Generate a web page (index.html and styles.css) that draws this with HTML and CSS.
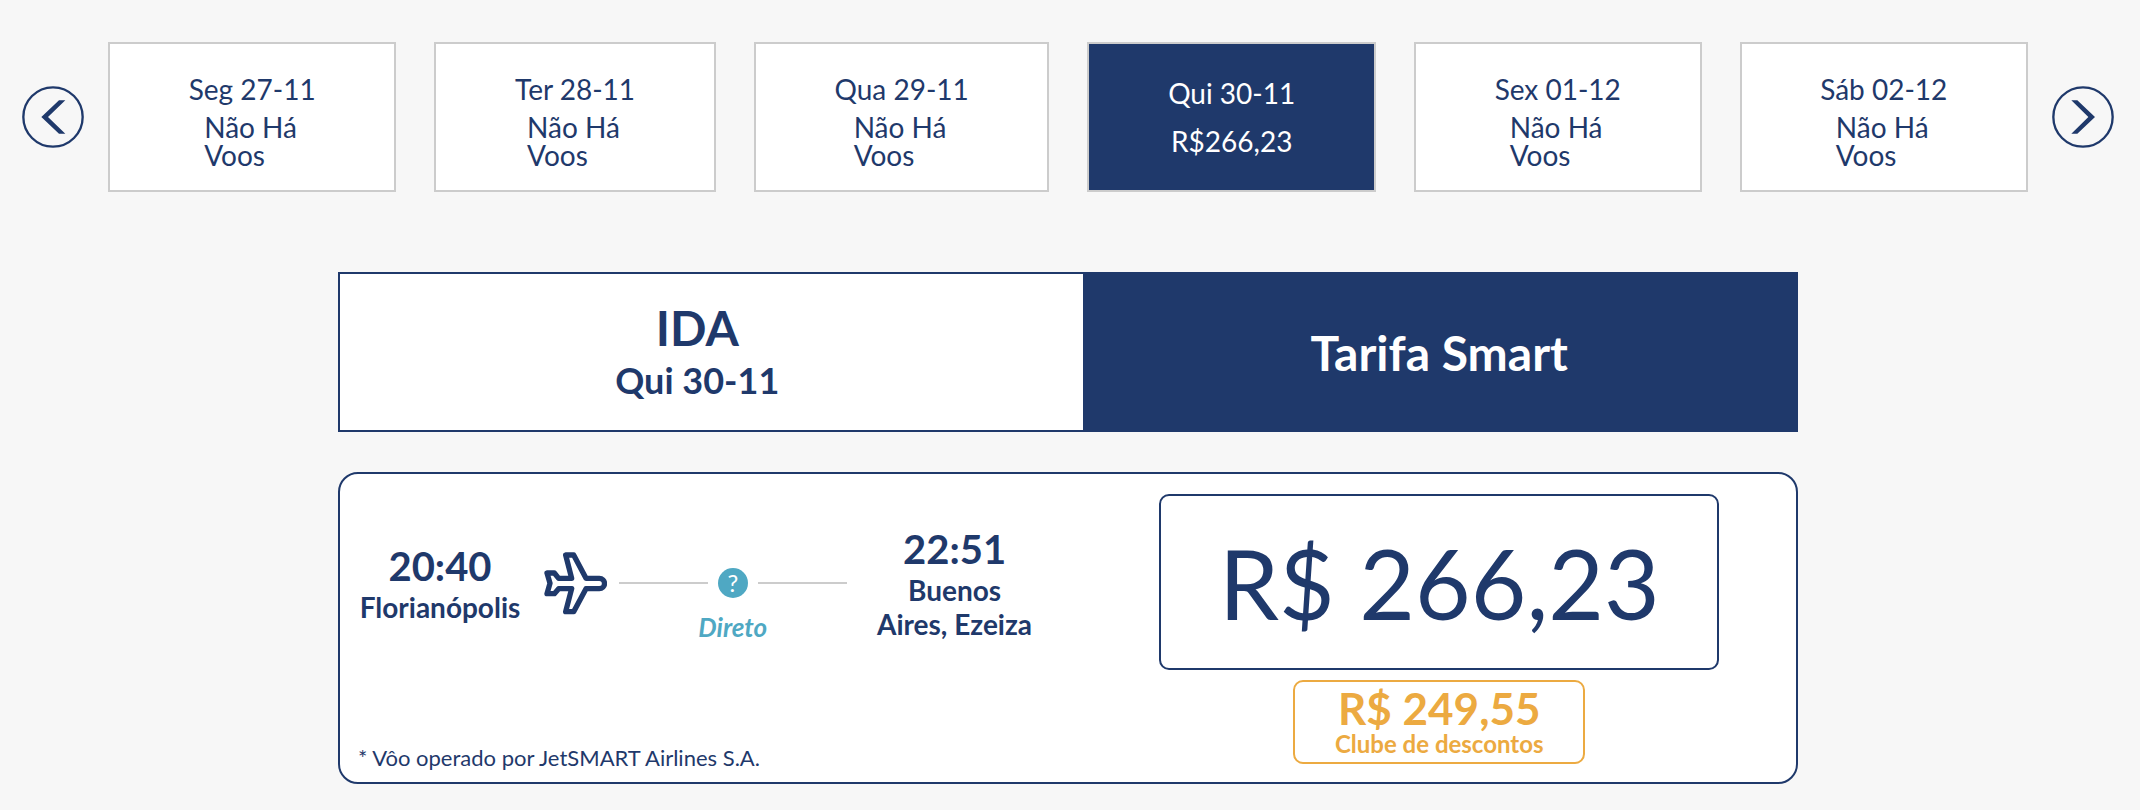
FILE: index.html
```
<!DOCTYPE html>
<html lang="pt-BR">
<head>
  <meta charset="UTF-8">
  <meta name="viewport" content="width=device-width, initial-scale=1.0">
  <title>Selecione seu voo</title>
  <link rel="stylesheet" href="styles.css">
</head>
<body>
  <!-- Datas -->
  <nav class="datas">
    <button class="seta" type="button" aria-label="Datas anteriores">
      <svg viewBox="0 0 186 186">
        <circle cx="93" cy="93" r="89"/>
        <polygon points="58,93 111,43 130,43 78,93 130,143 111,143"/>
      </svg>
    </button>
    <div class="lista-datas">
      <button class="data" type="button">
        <span>Seg 27-11</span>
        <span class="sem-voos">Não Há Voos</span>
      </button>
      <button class="data" type="button">
        <span>Ter 28-11</span>
        <span class="sem-voos">Não Há Voos</span>
      </button>
      <button class="data" type="button">
        <span>Qua 29-11</span>
        <span class="sem-voos">Não Há Voos</span>
      </button>
      <button class="data selecionada" type="button">
        <span>Qui 30-11</span>
        <span>R$266,23</span>
      </button>
      <button class="data" type="button">
        <span>Sex 01-12</span>
        <span class="sem-voos">Não Há Voos</span>
      </button>
      <button class="data" type="button">
        <span>Sáb 02-12</span>
        <span class="sem-voos">Não Há Voos</span>
      </button>
    </div>
    <button class="seta" type="button" aria-label="Próximas datas">
      <svg viewBox="0 0 186 186">
        <circle cx="93" cy="93" r="89"/>
        <polygon points="129,93 76,43 58,43 109,93 58,143 76,143"/>
      </svg>
    </button>
  </nav>

  <main class="voos">
    <!-- Cabeçalho -->
    <header class="cabecalho">
      <div class="trecho">
        <h1>IDA</h1>
        <h2>Qui 30-11</h2>
      </div>
      <div class="tarifa">Tarifa Smart</div>
    </header>

    <!-- Voo -->
    <article class="voo">
      <div class="detalhes">
        <div class="percurso">
          <div class="local origem">
            <span class="hora">20:40</span>
            <span class="cidade">Florianópolis</span>
          </div>
          <svg class="aviao" viewBox="42 68 189 189">
            <path d="M107 77H131L168 147H208A15 15 0 0 1 208 178H168L131 247H107L125 178H86L73 193H51L60 162L51 131H73L86 147H125Z"/>
          </svg>
          <div class="rota">
            <div class="linha">
              <button class="ajuda" type="button" aria-label="Ajuda">?</button>
            </div>
            <span class="direto">Direto</span>
          </div>
          <div class="local destino">
            <span class="hora">22:51</span>
            <span class="cidade">Buenos<br>Aires, Ezeiza</span>
          </div>
        </div>
        <p class="operador">* Vôo operado por JetSMART Airlines S.A.</p>
      </div>
      <div class="precos">
        <button class="preco" type="button">R$ 266,23</button>
        <button class="clube" type="button">
          <span class="clube-preco">R$ 249,55</span>
          <span class="clube-texto">Clube de descontos</span>
        </button>
      </div>
    </article>
  </main>
</body>
</html>
```
FILE: styles.css
```
* {
  box-sizing: border-box;
}
body {
  margin: 0;
  padding: 42px 26px 26px 22px;
  font-family: Lato, sans-serif;
  font-size: 28px;
  background: #f7f7f7;
  color: #1f396b; /* Azul marinho */
}
h1, h2, p {
  margin: 0;
}
button {
  padding: 0;
  font: inherit;
  color: inherit;
  background: none;
  border: none;
  cursor: pointer;
}

/* Datas */
.datas {
  display: flex;
  align-items: center;
  gap: 24px;
}
.seta {
  flex: none;
  width: 62px;
  height: 62px;
}
.seta svg {
  display: block;
}
.seta circle {
  fill: none;
  stroke: #1f396b;
  stroke-width: 7;
}
.seta polygon {
  fill: #1f396b;
}
.lista-datas {
  flex: 1;
  display: flex;
  gap: 38px;
}
.data {
  flex: 1 1 auto;
  min-height: 150px;
  display: flex;
  flex-direction: column;
  align-items: center;
  justify-content: center;
  gap: 10px;
  padding-top: 10px;
  line-height: 28px;
  background: #fff;
  border: 2px solid #ccc;
}
.data.selecionada {
  gap: 20px;
  padding-top: 0;
  background: #1f396b;
  color: #fff;
}
.sem-voos {
  width: 96px;
  text-align: left;
}

/* Cabeçalho */
.voos {
  max-width: 1460px;
  margin: 80px auto 0;
}
.cabecalho {
  display: flex;
  min-height: 160px;
  border: 2px solid #1f396b;
  background: #fff;
  font-weight: bold;
}
.trecho {
  width: 51%;
  padding-right: 28px;
  display: flex;
  flex-direction: column;
  justify-content: center;
  text-align: center;
}
.trecho h1 {
  font-size: 48px;
  line-height: 56px;
}
.trecho h2 {
  font-size: 36px;
  line-height: 48px;
}
.tarifa {
  flex: 1;
  display: flex;
  align-items: center;
  justify-content: center;
  font-size: 48px;
  background: #1f396b;
  color: #fff;
}

/* Voo */
.voo {
  display: flex;
  margin-top: 40px;
  background: #fff;
  border: 2px solid #1f396b;
  border-radius: 20px;
}
.detalhes {
  width: 51%;
  display: flex;
  flex-direction: column;
  justify-content: space-between;
  padding: 50px 20px 10px 18px;
}
.percurso {
  display: flex;
  align-items: center;
}
.local {
  display: flex;
  flex-direction: column;
  text-align: center;
  font-weight: bold;
}
.origem {
  min-width: 164px;
}
.destino {
  width: 216px;
}
.hora {
  font-size: 40px;
  line-height: 48px;
}
.cidade {
  line-height: 34px;
}
.aviao {
  flex: none;
  width: 63px;
  height: 63px;
  margin: 0 12px 0 22px;
  fill: none;
  stroke: #1f396b;
  stroke-width: 16;
  stroke-linejoin: round;
}
.rota {
  flex: 1;
  display: flex;
  flex-direction: column;
  gap: 14px;
  padding-top: 44px; /* Mantém a linha centralizada */
  text-align: center;
}
.linha {
  display: flex;
  align-items: center;
  gap: 10px;
}
.linha::before,
.linha::after {
  content: "";
  flex: 1;
  height: 2px;
  background: #ccc;
}
.ajuda {
  width: 30px;
  height: 30px;
  border-radius: 50%;
  background: #4fa8c3;
  color: #fff;
  font-size: 24px;
  line-height: 30px;
}
.direto {
  font-size: 26px;
  line-height: 30px;
  font-weight: bold;
  font-style: italic;
  color: #4fa8c3;
}
.operador {
  font-size: 22px;
  line-height: 28px;
}

/* Preços */
.precos {
  flex: 1;
  display: flex;
  flex-direction: column;
  align-items: center;
  gap: 10px;
  padding: 20px 20px 18px;
}
.preco {
  width: 560px;
  max-width: 100%;
  min-height: 176px;
  font-size: 96px;
  border: 2px solid #1f396b;
  border-radius: 10px;
}
.clube {
  width: 292px;
  min-height: 84px;
  display: flex;
  flex-direction: column;
  justify-content: center;
  font-weight: bold;
  color: #ecaa41; /* Laranja do clube */
  border: 2px solid #ecaa41;
  border-radius: 10px;
}
.clube-preco {
  font-size: 44px;
  line-height: 44px;
}
.clube-texto {
  font-size: 24px;
  line-height: 28px;
}
```
